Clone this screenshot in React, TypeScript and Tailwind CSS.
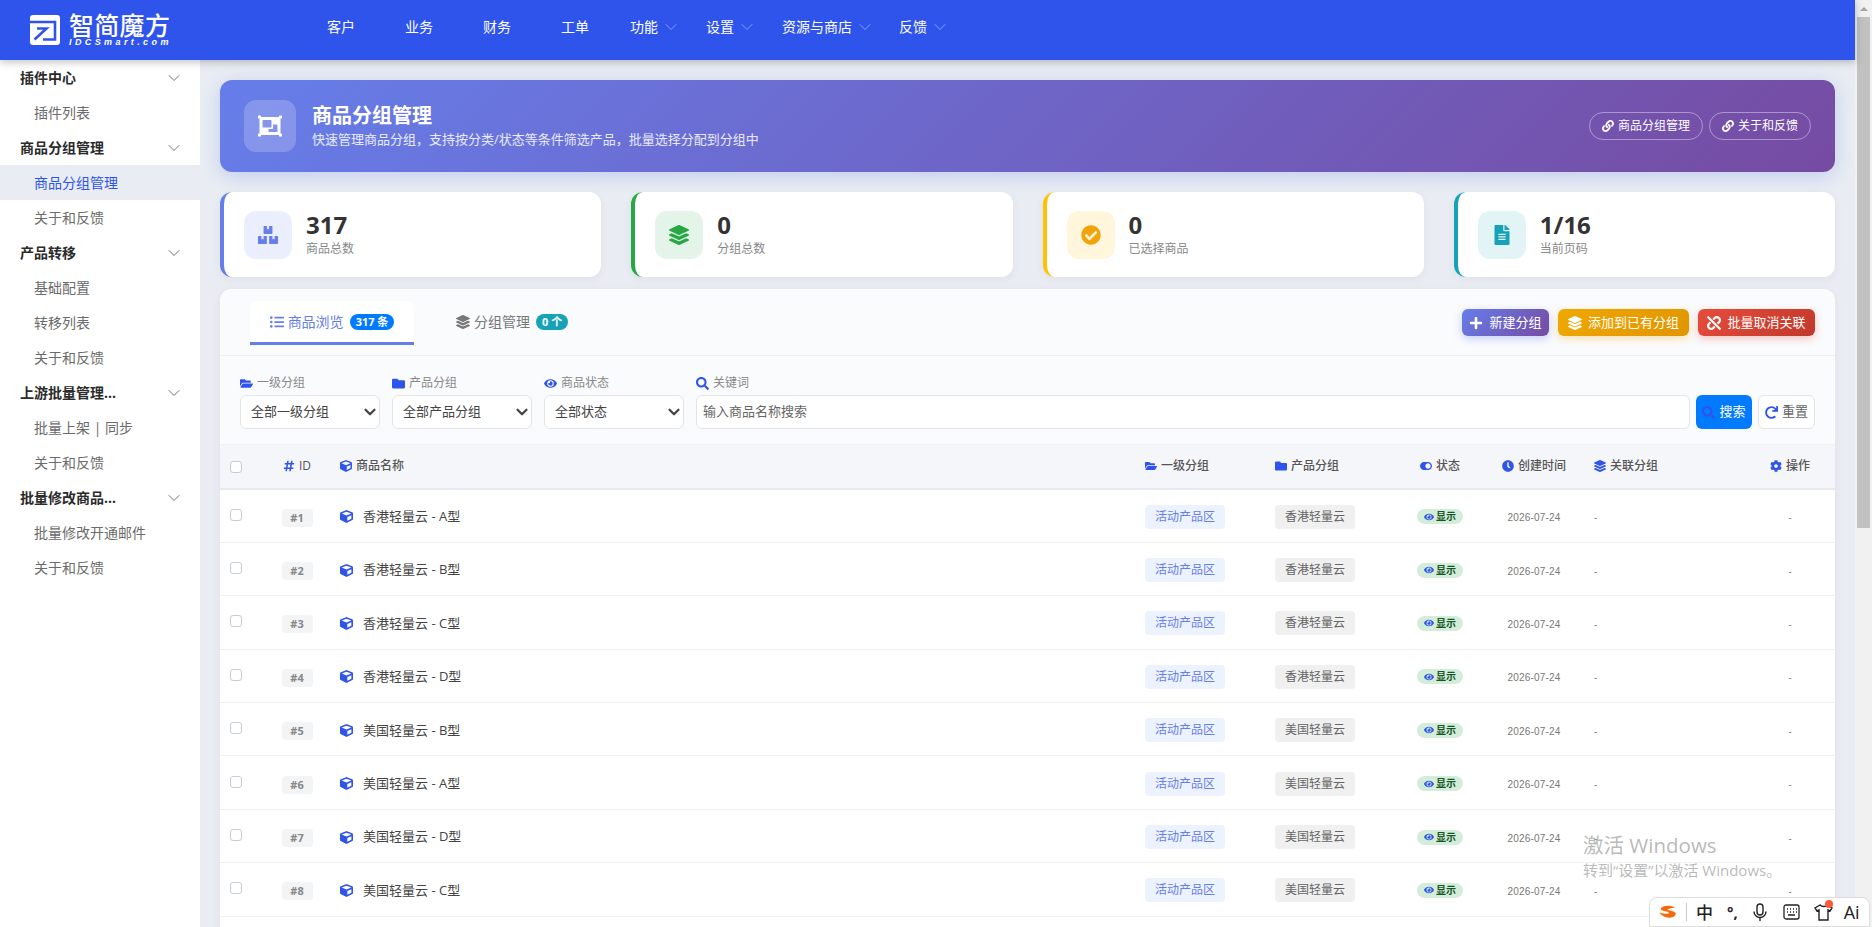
import type { ReactNode } from "react";
import { ChevronDown } from "lucide-react";
import {
  FaBoxes,
  FaCheckCircle,
  FaClock,
  FaCog,
  FaCube,
  FaEye,
  FaFileAlt,
  FaFolder,
  FaFolderOpen,
  FaHashtag,
  FaLayerGroup,
  FaLink,
  FaListUl,
  FaObjectGroup,
  FaPlus,
  FaRedo,
  FaSearch,
  FaToggleOn,
  FaUnlink,
} from "react-icons/fa";

const navItems = [
  { label: "客户", cls: "ml-[157px]" },
  { label: "业务", cls: "ml-[50px]" },
  { label: "财务", cls: "ml-[50px]" },
  { label: "工单", cls: "ml-[50px]" },
  { label: "功能", cls: "ml-[41px]", arrow: true },
  { label: "设置", cls: "ml-[25px]", arrow: true },
  { label: "资源与商店", cls: "ml-[25px]", arrow: true },
  { label: "反馈", cls: "ml-[24px]", arrow: true },
];

const sideGroups = [
  { title: "插件中心", items: ["插件列表"] },
  { title: "商品分组管理", items: ["商品分组管理", "关于和反馈"] },
  { title: "产品转移", items: ["基础配置", "转移列表", "关于和反馈"] },
  { title: "上游批量管理...", items: ["批量上架 | 同步", "关于和反馈"] },
  { title: "批量修改商品...", items: ["批量修改开通邮件", "关于和反馈"] },
];

const stats = [
  { value: "317", label: "商品总数", border: "border-[#667eea]", bg: "bg-[#ebeefc]", color: "text-[#667eea]", icon: <FaBoxes /> },
  { value: "0", label: "分组总数", border: "border-[#28a745]", bg: "bg-[#e5f4e9]", color: "text-[#28a745]", icon: <FaLayerGroup /> },
  { value: "0", label: "已选择商品", border: "border-[#ffc107]", bg: "bg-[#fff6dc]", color: "text-[#f0a30a]", icon: <FaCheckCircle /> },
  { value: "1/16", label: "当前页码", border: "border-[#17a2b8]", bg: "bg-[#e2f4f6]", color: "text-[#17a2b8]", icon: <FaFileAlt /> },
];

const rows = [
  { id: 1, name: "香港轻量云 - A型", group: "香港轻量云" },
  { id: 2, name: "香港轻量云 - B型", group: "香港轻量云" },
  { id: 3, name: "香港轻量云 - C型", group: "香港轻量云" },
  { id: 4, name: "香港轻量云 - D型", group: "香港轻量云" },
  { id: 5, name: "美国轻量云 - B型", group: "美国轻量云" },
  { id: 6, name: "美国轻量云 - A型", group: "美国轻量云" },
  { id: 7, name: "美国轻量云 - D型", group: "美国轻量云" },
  { id: 8, name: "美国轻量云 - C型", group: "美国轻量云" },
  { id: 9, name: "美国轻量云 - E型", group: "美国轻量云" },
];

const Logo = () => (
  <div className="flex items-center w-[200px] pl-[30px] shrink-0">
    <svg width="30" height="30" viewBox="0 0 30 30" className="shrink-0">
      <rect width="30" height="30" rx="3" fill="#fff" />
      <path d="M0 7H25V24.5H13" fill="none" stroke="#2f54eb" strokeWidth="2.6" />
      <path d="M4.5 24.5 16.5 13.5H7" fill="none" stroke="#2f54eb" strokeWidth="2.6" />
    </svg>
    <div className="ml-[9px] text-white">
      <div className="text-[25px] font-medium tracking-[0.3px] leading-[24px]">智简魔方</div>
      <div className="text-[9px] font-bold italic tracking-[3.4px] leading-[10px] font-['Liberation_Sans',sans-serif]">IDCSmart.com</div>
    </div>
  </div>
);

const Sidebar = () => (
  <aside className="w-[200px] shrink-0 bg-white">
    {sideGroups.map((g) => (
      <div key={g.title}>
        <div className="h-[35px] pl-5 pr-4 flex items-center justify-between">
          <span className="text-sm font-bold text-[#2b2b2b]">{g.title}</span>
          <ChevronDown size={20} strokeWidth={1} className="text-[#555]" />
        </div>
        {g.items.map((item) => {
          const active = item === "商品分组管理";
          return (
            <div
              key={item}
              className={`h-[35px] pl-[34px] flex items-center text-sm ${active ? "bg-[#e9ecf3] text-[#2f54eb]" : "text-[#6b6b6b]"}`}
            >
              {item}
            </div>
          );
        })}
      </div>
    ))}
  </aside>
);

const LinkPill = ({ children }: { children: ReactNode }) => (
  <a className="h-7 px-3 flex items-center gap-1 rounded-full border border-white/40 text-xs text-white">
    <FaLink className="text-xs" />
    {children}
  </a>
);

const Banner = () => (
  <div className="h-[92px] rounded-xl bg-[linear-gradient(135deg,#667eea_0%,#764ba2_100%)] shadow-[0_4px_20px_rgba(102,126,234,0.3)] pl-6 pr-6 flex items-center">
    <div className="w-[52px] h-[52px] rounded-xl bg-white/20 flex items-center justify-center text-white text-2xl">
      <FaObjectGroup />
    </div>
    <div className="ml-4 flex-1">
      <h1 className="text-xl font-bold text-white leading-[26px]">商品分组管理</h1>
      <p className="text-[13px] text-white/85 leading-[20px]">快速管理商品分组，支持按分类/状态等条件筛选产品，批量选择分配到分组中</p>
    </div>
    <div className="flex gap-[6px]">
      <LinkPill>商品分组管理</LinkPill>
      <LinkPill>关于和反馈</LinkPill>
    </div>
  </div>
);

const StatCards = () => (
  <div className="grid grid-cols-4 gap-[30px] mt-5">
    {stats.map((s) => (
      <div
        key={s.label}
        className={`h-[85px] rounded-xl bg-white border-l-4 ${s.border} shadow-[0_2px_10px_rgba(0,0,0,0.05)] pl-5 flex items-center`}
      >
        <div className={`w-12 h-12 rounded-xl flex items-center justify-center text-xl ${s.bg} ${s.color}`}>{s.icon}</div>
        <div className="ml-[14px] -mt-[2px]">
          <div className="text-2xl font-bold text-[#333] leading-[30px]">{s.value}</div>
          <div className="text-xs text-[#888] leading-[18px]">{s.label}</div>
        </div>
      </div>
    ))}
  </div>
);

const ActionBtn = ({ cls, icon, children }: { cls: string; icon: ReactNode; children: ReactNode }) => (
  <button className={`h-[27px] rounded-md flex items-center justify-center gap-[6px] text-[13px] text-white ${cls}`}>
    <span className="text-[14px]">{icon}</span>
    {children}
  </button>
);

const Tabs = () => (
  <div className="h-[67px] bg-[#fafbfd] border-b border-[#eef0f4] pl-[30px] pr-5 flex items-start rounded-t-xl">
    <div className="mt-3 h-[44px] w-[164px] bg-white border-b-[3px] border-[#667eea] rounded-t-lg flex items-center justify-center gap-[6px] text-[#667eea] text-sm">
      <span className="flex items-center gap-1">
        <FaListUl className="text-sm" />
        商品浏览
      </span>
      <span className="h-4 px-[6px] rounded-full bg-[#007bff] text-white text-[11px] font-bold flex items-center">317 条</span>
    </div>
    <div className="mt-3 h-[41px] ml-[42px] flex items-center gap-[6px] text-[#777] text-sm">
      <span className="flex items-center gap-1">
        <FaLayerGroup className="text-sm" />
        分组管理
      </span>
      <span className="h-4 px-[6px] rounded-full bg-[#17a2b8] text-white text-[11px] font-bold flex items-center">0 个</span>
    </div>
    <div className="ml-auto mt-5 flex gap-[9px]">
      <ActionBtn cls="w-[87px] bg-[linear-gradient(135deg,#667eea_0%,#764ba2_100%)] shadow-[0_3px_8px_rgba(102,126,234,0.35)]" icon={<FaPlus />}>新建分组</ActionBtn>
      <ActionBtn cls="w-[131px] bg-[linear-gradient(135deg,#f0a800_0%,#e09500_100%)] shadow-[0_3px_8px_rgba(240,168,0,0.3)]" icon={<FaLayerGroup />}>添加到已有分组</ActionBtn>
      <ActionBtn cls="w-[117px] bg-[linear-gradient(135deg,#e74c3c_0%,#c0392b_100%)] shadow-[0_3px_8px_rgba(231,76,60,0.3)]" icon={<FaUnlink />}>批量取消关联</ActionBtn>
    </div>
  </div>
);

const FilterLabel = ({ icon, children }: { icon: ReactNode; children: ReactNode }) => (
  <label className="h-[14px] mb-[5px] flex items-center gap-1 text-xs text-[#888]">
    <span className="text-[#2f54eb] text-[13px]">{icon}</span>
    {children}
  </label>
);

const FilterSelect = ({ icon, label, value }: { icon: ReactNode; label: string; value: string }) => (
  <div className="w-[140px] shrink-0">
    <FilterLabel icon={icon}>{label}</FilterLabel>
    <div className="h-[34px] pl-[10px] bg-white border border-[#e2e4e9] rounded-md flex items-center justify-between text-[13px] text-[#444]">
      {value}
      <ChevronDown size={18} strokeWidth={3} className="text-[#444]" />
    </div>
  </div>
);

const Filters = () => (
  <div className="h-[89px] bg-[#fafbfd] border-b border-[#eef0f4] px-5 flex items-end pb-[15px] gap-3">
    <FilterSelect icon={<FaFolderOpen />} label="一级分组" value="全部一级分组" />
    <FilterSelect icon={<FaFolder />} label="产品分组" value="全部产品分组" />
    <FilterSelect icon={<FaEye />} label="商品状态" value="全部状态" />
    <div className="flex-1 min-w-0">
      <FilterLabel icon={<FaSearch />}>关键词</FilterLabel>
      <div className="h-[34px] px-[6px] bg-white border border-[#e2e4e9] rounded-md flex items-center text-[13px] text-[#666]">输入商品名称搜索</div>
    </div>
    <div className="flex gap-[6px] -ml-[6px]">
      <button className="w-[56px] h-[34px] rounded-md bg-[#007bff] text-white text-[13px] flex items-center justify-center gap-1">
        <FaSearch className="text-[#2f54eb] text-[13px]" />
        搜索
      </button>
      <button className="w-[57px] h-[34px] rounded-md bg-white border border-[#e2e4e9] text-[#666] text-[13px] flex items-center justify-center gap-1">
        <FaRedo className="text-[#2f54eb] text-[13px]" />
        重置
      </button>
    </div>
  </div>
);

const Th = ({ icon, children, cls = "" }: { icon: ReactNode; children: ReactNode; cls?: string }) => (
  <th className={`font-medium text-xs text-[#555] pt-[1px] ${cls}`}>
    <span className="inline-flex items-center gap-1">
      <span className="text-[#2f54eb] text-xs">{icon}</span>
      {children}
    </span>
  </th>
);

const ProductTable = () => (
  <table className="w-full table-fixed border-collapse">
    <colgroup>
      <col className="w-[44px]" />
      <col className="w-[66px]" />
      <col className="w-[805px]" />
      <col className="w-[130px]" />
      <col className="w-[131px]" />
      <col className="w-[88px]" />
      <col className="w-[100px]" />
      <col className="w-[161px]" />
      <col className="w-[90px]" />
    </colgroup>
    <thead>
      <tr className="h-[44px] bg-[#f5f6fa] border-b-2 border-[#e6e9ef]">
        <th className="pl-[10px] text-left">
          <span className="block w-3 h-3 rounded-[3px] border border-[#c5ccd6] bg-white" />
        </th>
        <Th icon={<FaHashtag />} cls="text-center">ID</Th>
        <Th icon={<FaCube />} cls="text-left pl-[10px]">商品名称</Th>
        <Th icon={<FaFolderOpen />} cls="text-left pl-[10px]">一级分组</Th>
        <Th icon={<FaFolder />} cls="text-left pl-[10px]">产品分组</Th>
        <Th icon={<FaToggleOn />} cls="text-center">状态</Th>
        <Th icon={<FaClock />} cls="text-center">创建时间</Th>
        <Th icon={<FaLayerGroup />} cls="text-left pl-[10px]">关联分组</Th>
        <Th icon={<FaCog />} cls="text-center">操作</Th>
      </tr>
    </thead>
    <tbody>
      {rows.map((r) => (
        <tr key={r.id} className="h-[53.4px] border-b border-[#eef0f4] bg-white">
          <td className="pl-[10px] pb-[2px]">
            <span className="block w-3 h-3 rounded-[3px] border border-[#c5ccd6] bg-white" />
          </td>
          <td className="text-center">
            <span className="inline-block w-[31px] h-[18px] mt-1 rounded bg-[#f3f4f6] text-[#888] text-[11px] font-bold leading-[18px]">#{r.id}</span>
          </td>
          <td className="pl-[10px] pt-[2px]">
            <span className="flex items-center text-[13px] text-[#444]">
              <FaCube className="text-[#2f54eb] text-[13px] mr-[10px]" />
              {r.name}
            </span>
          </td>
          <td className="pl-[10px]">
            <span className="inline-flex items-center justify-center w-[80px] h-6 -mt-[6px] rounded bg-[#edf2ff] text-[#667eea] text-xs">活动产品区</span>
          </td>
          <td className="pl-[10px]">
            <span className="inline-flex items-center justify-center w-[80px] h-6 -mt-[6px] rounded bg-[#f0f0f0] text-[#666] text-xs">{r.group}</span>
          </td>
          <td className="text-center">
            <span className="inline-flex items-center justify-center gap-[2px] w-[46px] h-[15px] mt-[4px] rounded-full bg-[#d4edda] text-[#155724] text-[10px] font-bold">
              <FaEye className="text-[#2f54eb] text-[10px]" />
              显示
            </span>
          </td>
          <td className="text-center pt-[4px] text-[10px] text-[#777] tracking-[0.2px] font-['Liberation_Sans',sans-serif]">2026-07-24</td>
          <td className="pl-[10px] pt-[4px] text-[10px] text-[#777]">-</td>
          <td className="text-center pt-[4px] text-[10px] text-[#777]">-</td>
        </tr>
      ))}
    </tbody>
  </table>
);

const SogouBar = () => (
  <div className="absolute right-[2px] bottom-0 w-[221px] h-[30px] bg-white border border-[#ddd] rounded-t-lg flex items-center pl-[8px] text-[#222]">
    <svg width="19" height="16" viewBox="0 0 20 16" className="shrink-0">
      <path d="M18 3.2C13 .2 4 .8 3 4.6c-.8 3 9 2.4 8.4 4.4-.4 1.4-5 1.2-10 -.4 2 3 6 5.6 11 5.4 4.4-.2 6.4-2.4 6.2-4.4-.4-3.2-9-3-8.6-4.2.4-1.2 4.4-1.4 8-2.2Z" fill="#f76a0c" />
    </svg>
    <span className="w-px h-[18px] bg-[#ccc] ml-[9px]" />
    <span className="ml-[9px] text-[17px] leading-none font-medium">中</span>
    <span className="ml-[14px] text-[15px] leading-none font-bold">°,</span>
    <svg width="16" height="19" viewBox="0 0 16 19" className="ml-[14px] shrink-0" fill="none" stroke="#222" strokeWidth="1.4">
      <rect x="5" y="1" width="6" height="11" rx="3" />
      <path d="M2 8.5a6 6 0 0 0 12 0M8 15v3" />
    </svg>
    <svg width="17" height="16" viewBox="0 0 17 16" className="ml-[15px] shrink-0" fill="none" stroke="#222" strokeWidth="1.3">
      <rect x="1" y="1" width="15" height="14" rx="2" />
      <path d="M4 5h1M7 5h1M10 5h1M13 5h1M4 8h1M7 8h1M10 8h1M13 8h1M5 11h7" />
    </svg>
    <span className="relative ml-[14px] shrink-0">
      <svg width="19" height="17" viewBox="0 0 19 17" fill="none" stroke="#222" strokeWidth="1.4" className="block">
        <path d="M6 1 1 4l2 3 2-1v10h9V6l2 1 2-3-5-3c-1 2-5 2-7 0Z" />
      </svg>
      <span className="absolute -top-[4px] right-0 w-2 h-2 rounded-full bg-[#ff5a36]" />
    </span>
    <span className="ml-[11px] text-[18px] leading-none font-medium">Ai</span>
  </div>
);

const Watermark = () => (
  <div className="absolute left-[1583px] top-[832px] text-[#9a9a9a]/70 pointer-events-none">
    <div className="text-[20.5px] leading-[26px]">激活 Windows</div>
    <div className="text-[15px] leading-[20px] mt-[2px]">转到“设置”以激活 Windows。</div>
  </div>
);

const Scrollbar = () => (
  <div className="w-[17px] shrink-0 bg-[#f1f1f1] flex flex-col items-center">
    <div className="h-[17px] flex items-center justify-center">
      <div className="w-0 h-0 border-x-[4px] border-x-transparent border-b-[4px] border-b-[#a3a3a3]" />
    </div>
    <div className="w-[13px] h-[511px] bg-[#c1c1c1]" />
  </div>
);

export default function App() {
  return (
    <div className="relative h-screen flex overflow-hidden bg-[#e9edf3] font-['Open_Sans','Noto_Sans_CJK_SC',sans-serif]">
      <div className="flex-1 min-w-0 flex flex-col">
        <header className="h-[60px] shrink-0 bg-[#2f54eb] shadow-[0_2px_8px_rgba(0,0,0,0.25)] flex items-center relative z-10">
          <Logo />
          <nav className="flex items-center text-sm text-white -ml-[30px] -mt-[7px]">
            {navItems.map((n) => (
              <span key={n.label} className={`flex items-center ${n.cls}`}>
                {n.label}
                {n.arrow && <ChevronDown size={20} strokeWidth={1} className="ml-[3px] text-white/50" />}
              </span>
            ))}
          </nav>
        </header>
        <div className="flex-1 min-h-0 flex">
          <Sidebar />
          <main className="flex-1 min-w-0 px-5 pt-5 overflow-hidden">
            <Banner />
            <StatCards />
            <section className="mt-3 bg-white rounded-t-xl shadow-[0_2px_10px_rgba(0,0,0,0.05)]">
              <Tabs />
              <Filters />
              <ProductTable />
            </section>
          </main>
        </div>
      </div>
      <Scrollbar />
      <Watermark />
      <SogouBar />
    </div>
  );
}
